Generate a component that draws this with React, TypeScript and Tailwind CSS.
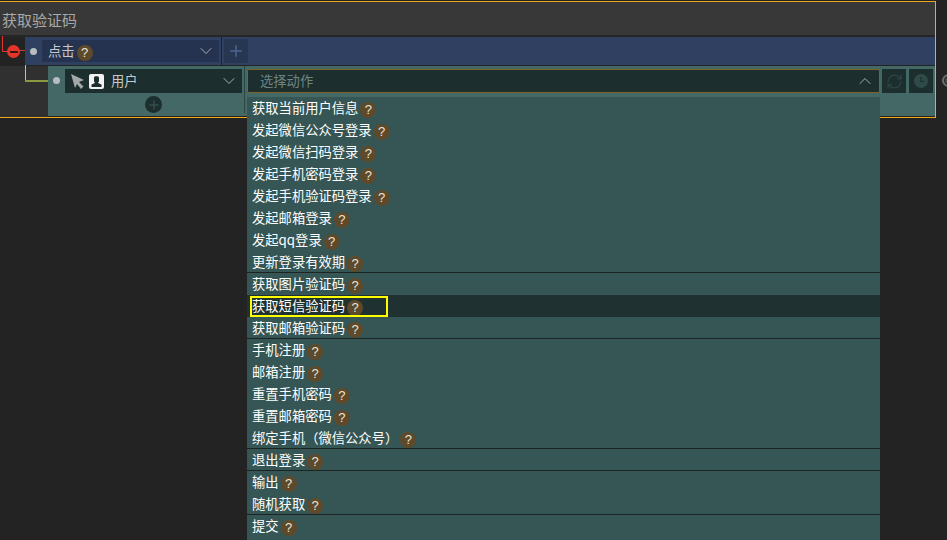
import { ChevronDown, ChevronUp, Plus, RefreshCw } from 'lucide-react';

const font = { fontFamily: '"Noto Sans CJK SC", "Liberation Sans", sans-serif' };

// menu groups, each one ends with a dark line
const groups = [
    ['获取当前用户信息', '发起微信公众号登录', '发起微信扫码登录', '发起手机密码登录', '发起手机验证码登录', '发起邮箱登录', '发起qq登录', '更新登录有效期'],
    ['获取图片验证码', '获取短信验证码', '获取邮箱验证码'],
    ['手机注册', '邮箱注册', '重置手机密码', '重置邮箱密码', '绑定手机（微信公众号）'],
    ['退出登录'],
    ['输出', '随机获取'],
    ['提交'],
];

const Help = () => (
    <span className="ml-[2px] mt-[3px] flex h-[16px] w-[16px] shrink-0 items-center justify-center rounded-full bg-[#5e4a2b] font-['Liberation_Sans'] text-[13px] leading-none text-[#e8e4dc]">
        ?
    </span>
);

const MenuItem = ({ label, last }: { label: string; last: boolean }) => {
    const active = label === '获取短信验证码';
    return (
        <div className={`relative flex h-[22px] items-center pl-[5px] ${active ? 'bg-[#1f3130]' : ''}`}>
            <span className="mt-[-1px] text-[13.3px] leading-none text-white">{label}</span>
            <Help />
            {active && <div className="absolute left-[3px] top-[1px] h-[21px] w-[138px] border-2 border-[#ffff00]" />}
            {last && label !== '提交' && <div className="absolute bottom-0 left-0 right-0 h-px bg-[#1c2424]" />}
        </div>
    );
};

const App = () => {
    return (
        <div className="relative h-[540px] w-[947px] overflow-hidden bg-[#232323] pt-px" style={font}>
            {/* Frame */}
            <div className="w-[936px] border-r border-t border-b border-[#f0a81e]">
                <div className="flex h-[35px] items-center border-b-2 border-[#262626] bg-[#383838] pl-[2px]">
                    <span className="mt-[2px] text-[15px] leading-none text-[#a8a8a8]">获取验证码</span>
                </div>

                {/* Trigger row */}
                <div className="flex h-[28px] bg-[#232323]">
                    <div className="relative w-[25px]">
                        <div className="absolute left-[2px] top-[-1px] h-[16px] w-px bg-[#e5352b]" />
                        <div className="absolute left-[2px] top-[14px] h-px w-[8px] bg-[#e5352b]" />
                        <div className="absolute left-[14px] top-[13px] h-px w-[11px] bg-[#c93a30]" />
                        <div className="absolute left-[7px] top-[8px] flex h-[13px] w-[13px] items-center justify-center rounded-full bg-[#e5352b]">
                            <div className="h-[2px] w-[8px] bg-[#3a1512]" />
                        </div>
                    </div>
                    <div className="flex flex-1 items-center bg-[#2f4060]">
                        <div className="flex w-[17px] justify-center">
                            <div className="ml-[-1px] h-[7px] w-[7px] rounded-full bg-[#b9bcc0]" />
                        </div>
                        <div className="flex h-[22px] w-[177px] items-center bg-[#253350] pl-[6px] pr-[3px]">
                            <span className="text-[13.3px] leading-none text-[#c6c9cc]">点击</span>
                            <Help />
                            <ChevronDown className="ml-auto h-[20px] w-[20px] text-[#b4b8bc]" strokeWidth={1.1} />
                        </div>
                        <div className="ml-[2px] h-full w-px bg-[#232323]" />
                        <div className="ml-[2px] flex h-[24px] w-[24px] items-center justify-center rounded-[2px] bg-[#273651]">
                            <Plus className="h-[18px] w-[18px] text-[#4d6694]" strokeWidth={2} />
                        </div>
                    </div>
                </div>

                {/* Action row */}
                <div className="flex h-[52px] border-t border-[#232323] bg-[#303030]">
                    <div className="relative w-[48px]">
                        <div className="absolute left-[25px] top-[-1px] h-[16px] w-px bg-[#c4d04a]" />
                        <div className="absolute left-[25px] top-[14px] h-[2px] w-[23px] bg-[#8a9a40]" />
                    </div>
                    <div className="flex flex-1 items-start border-b border-[#232323] bg-[#436866] pt-[3px]">
                        <div className="flex w-[17px] justify-center pt-[8px]">
                            <div className="h-[7px] w-[7px] rounded-full bg-[#b9bcc0]" />
                        </div>
                        <div className="flex flex-col items-center">
                            <div className="flex h-[24px] w-[177px] items-center bg-[#1d2e2e] pl-[5px] pr-[3px]">
                                <svg viewBox="0 0 14 15" className="h-[15px] w-[14px]">
                                    <path d="M1 0 L14 6 L9 8 L13.5 12.5 L11 15 L7 10 L5 14 Z" fill="#a3a8a8" />
                                </svg>
                                <span className="ml-[5px] flex h-[15px] w-[15px] items-end justify-center overflow-hidden rounded-[2px] bg-[#f2f2f2]">
                                    <svg viewBox="0 0 15 15" className="h-[15px] w-[15px]">
                                        <path d="M5 3.5 C5 1.8 10 1.8 10 3.5 L10 7 C10 8 9 8.5 9 9 L12.5 10.5 L12.5 13 L2.5 13 L2.5 10.5 L6 9 C6 8.5 5 8 5 7 Z" fill="#1d2e2e" />
                                    </svg>
                                </span>
                                <span className="ml-[7px] text-[13.3px] leading-none text-[#c6cbcb]">用户</span>
                                <ChevronDown className="ml-auto h-[20px] w-[20px] text-[#b4b8bc]" strokeWidth={1.1} />
                            </div>
                            <div className="mt-[3px] flex h-[17px] w-[17px] items-center justify-center rounded-full bg-[#1d2e2e]">
                                <Plus className="h-[14px] w-[14px] text-[#34504e]" strokeWidth={2.5} />
                            </div>
                        </div>
                        <div className="ml-[2px] h-[47px] w-px bg-[#2e4544] mt-[-3px]" />
                        <div className="ml-[2px] flex h-[24px] w-[633px] items-center rounded-[2px] border border-[#7a6426] bg-[#1d2e2e] pl-[12px] pr-[4px]">
                            <span className="mt-[-1px] text-[13.3px] leading-none text-[#6f8584]">选择动作</span>
                            <ChevronUp className="ml-auto h-[20px] w-[20px] text-[#b4b8bc]" strokeWidth={1.1} />
                        </div>
                        <div className="ml-[2px] flex h-[24px] w-[24px] items-center justify-center bg-[#1d2e2e]">
                            <RefreshCw className="h-[17px] w-[17px] text-[#2b4442]" strokeWidth={2} />
                        </div>
                        <div className="ml-[3px] flex h-[24px] w-[24px] items-center justify-center bg-[#1d2e2e]">
                            <svg viewBox="0 0 14 14" className="h-[14px] w-[14px]">
                                <circle cx="7" cy="7" r="7" fill="#2f4a48" />
                                <path d="M7 3 V7.5 H10.5" stroke="#1d2e2e" strokeWidth="1.2" fill="none" />
                            </svg>
                        </div>
                    </div>
                </div>
            </div>

            {/* Add icon, cut by the page edge */}
            <div className="absolute left-[942px] top-[74px] flex h-[13px] w-[13px] items-center justify-center rounded-full border-2 border-[#6e6e6e]">
                <div className="h-[7px] w-[7px] rounded-full bg-[#4c4c4c]" />
            </div>

            {/* Action menu */}
            <div className="absolute left-[247px] top-[97px] h-[443px] w-[633px] bg-[#355654]">
                {groups.map((group) =>
                    group.map((label, i) => <MenuItem key={label} label={label} last={i === group.length - 1} />)
                )}
            </div>
        </div>
    );
};

export default App;
